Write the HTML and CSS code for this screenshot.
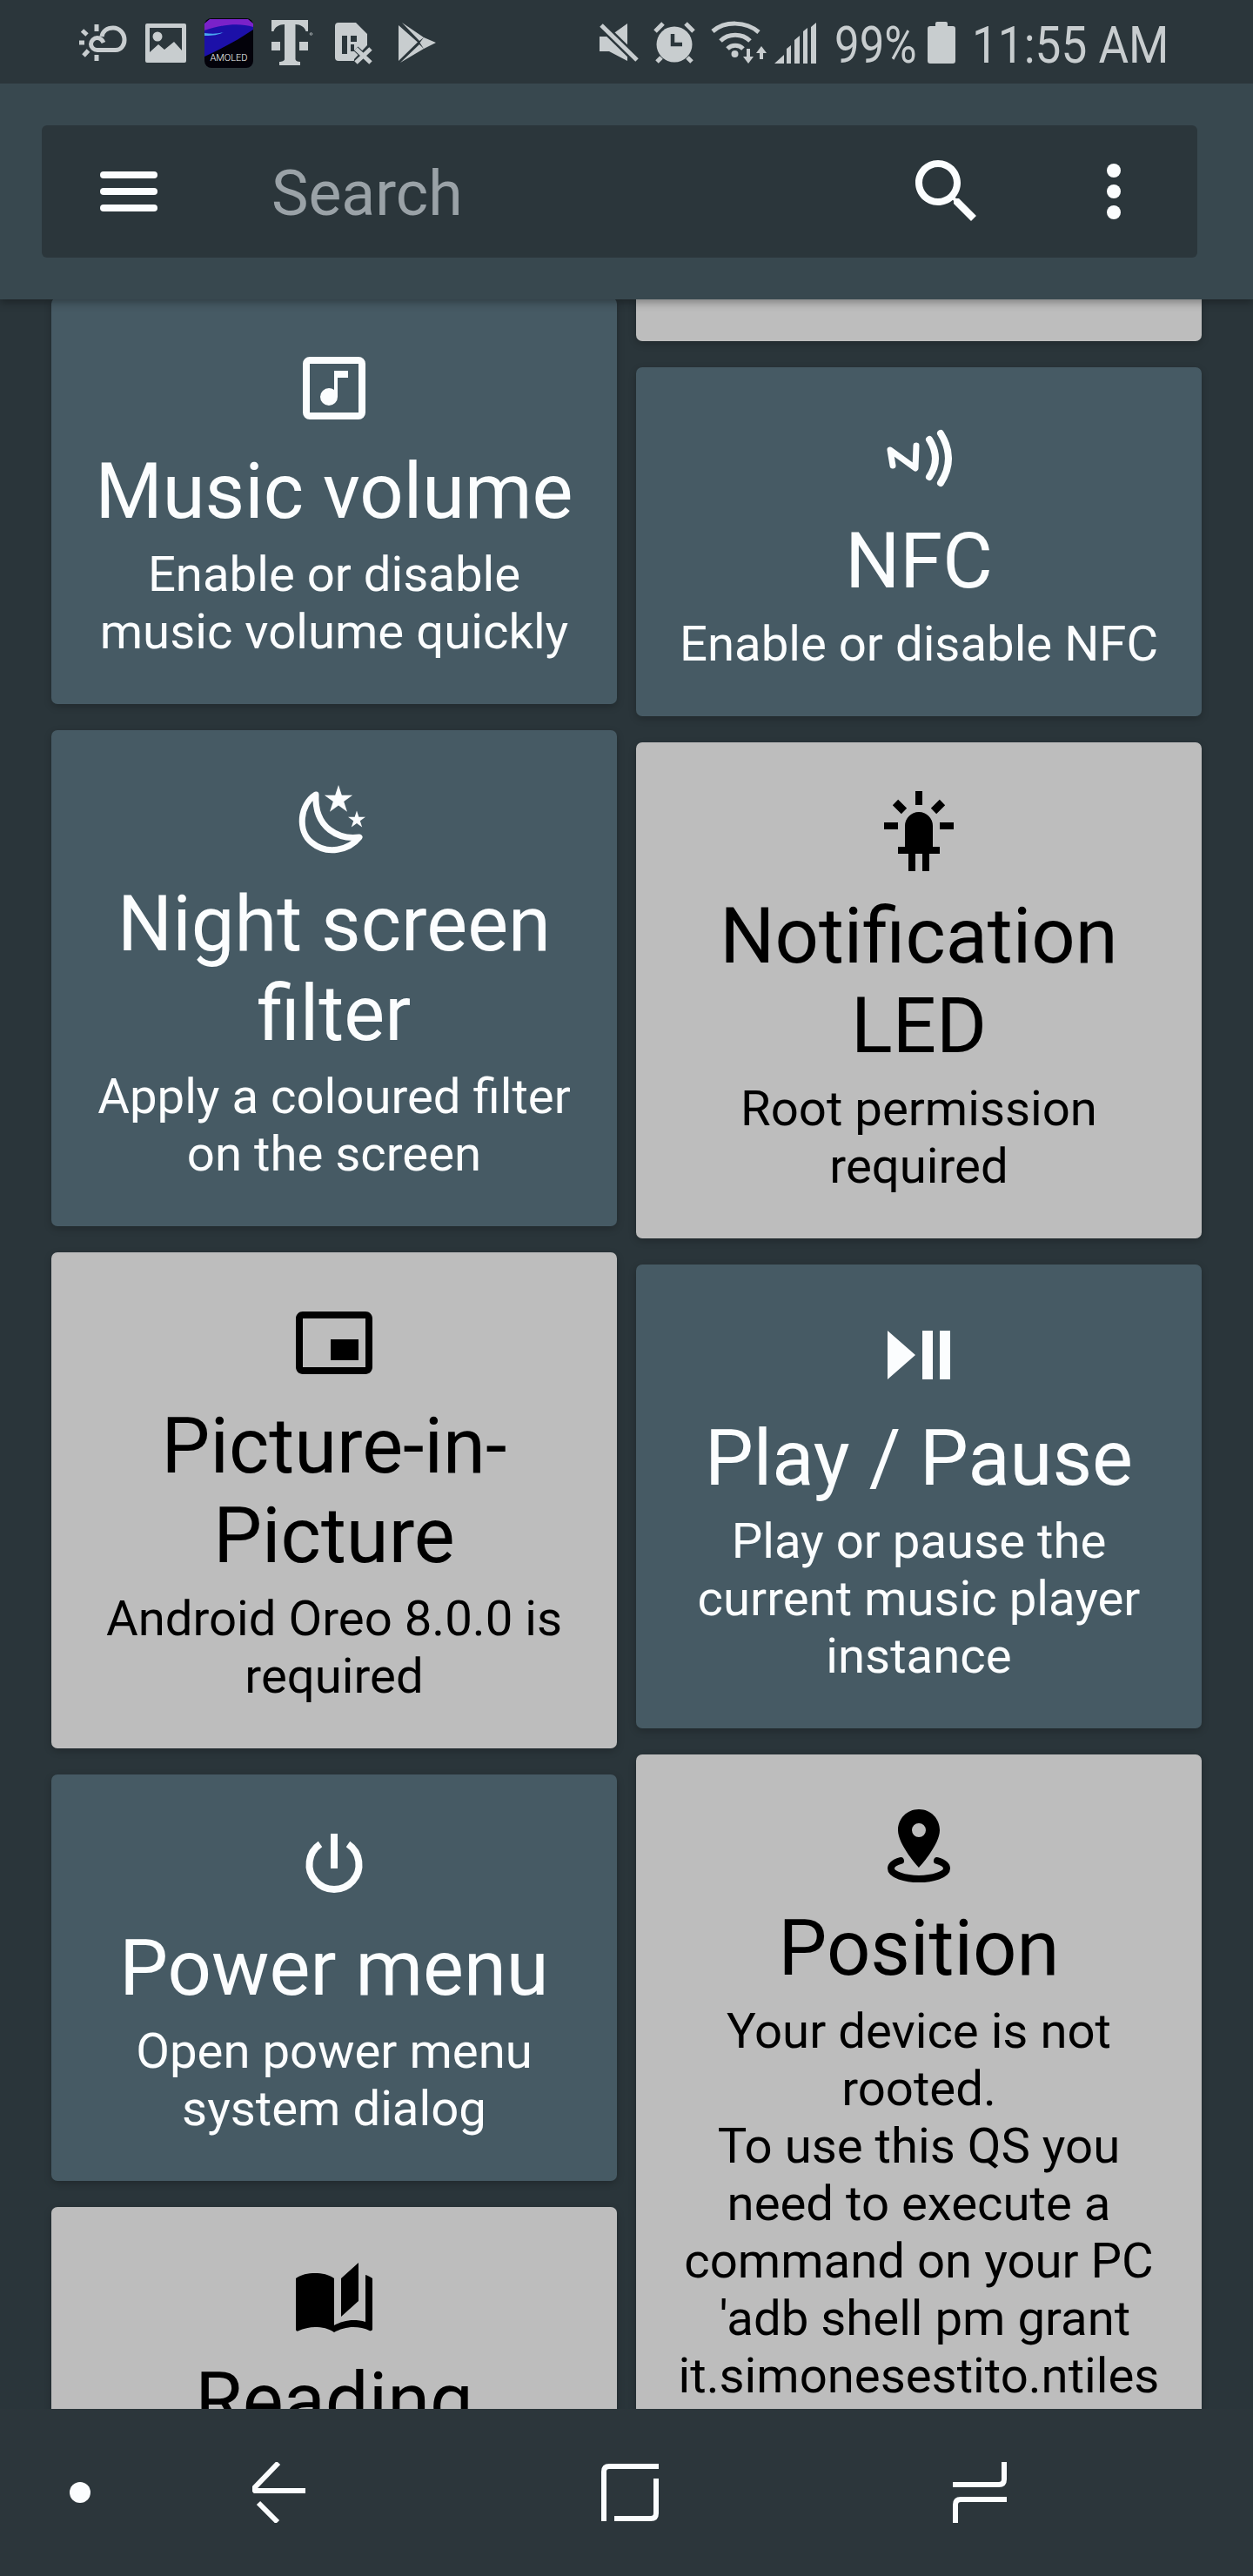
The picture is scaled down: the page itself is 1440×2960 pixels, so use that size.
FILE: index.html
```html
<!DOCTYPE html>
<html lang="en">
<head>
<meta charset="utf-8">
<title>Tiles</title>
<link rel="stylesheet" href="styles.css">
</head>
<body>
<div class="screen">
  <header class="top">
    <div class="status">
      <div class="status-left">
        <svg class="si" width="56" height="42" viewBox="0 0 56 42"><g fill="none" stroke="#c8cdcf" stroke-width="5"><path d="M29 21C27 17 25 15.500 21.700 15.500C18 15.500 14.500 19 14.500 22.700C14.500 26.500 18 29.500 21.700 29.500H43C49 29.500 53 24 53 18C53 10 47 4 40 4C33 4 28 8 27 14"/><path d="M1 21H7M21 0V8M21 35V42M4.500 7L10 12M6 36L11.500 30"/></g></svg>
        <svg class="si" width="47" height="45" viewBox="0 0 47 45"><path fill="#c8cdcf" fill-rule="evenodd" d="M2 0H45Q47 0 47 2V43Q47 45 45 45H2Q0 45 0 43V2Q0 0 2 0ZM5 5V33L15 24L22 30L33 21L42 31V5Z"/><circle cx="14" cy="15" r="5.500" fill="#c8cdcf"/></svg>
        <svg class="si" width="56" height="57" viewBox="0 0 56 57"><rect width="56" height="57" rx="8" fill="#03020a"/><path fill="#1c10a8" d="M0 14C20 4 40 5 56 7V13C40 24 20 35 0 44Z"/><path fill="#7a22c9" d="M6 1H50L56 6V10C40 5 20 7 0 14V6Z"/><path fill="#4aa8f0" d="M0 17C8 18 16 18 22 16C14 20 6 20 0 20Z"/><text x="28" y="49" class="amoled">AMOLED</text></svg>
        <svg class="si si-gap" width="43" height="52" viewBox="0 0 43 52"><path fill="#c8cdcf" d="M0 0H42V13H39.500C38.500 8 33 5 27.500 5V45C27.500 47 30 48 33 48V52H9V48C12 48 15 47 15 45V5C9 5 3.500 8 2.500 13H0Z"/><rect y="25" width="10" height="10" fill="#c8cdcf"/><rect x="32" y="25" width="10" height="10" fill="#c8cdcf"/><circle cx="45.500" cy="16" r="1.300" fill="none" stroke="#c8cdcf" stroke-width=".8"/></svg>
        <svg class="si si-gap" width="43" height="47" viewBox="0 0 43 47"><path fill="#c8cdcf" d="M4 0H24L37 13V26L22 42V44H4Q0 44 0 40V4Q0 0 4 0Z"/><path fill="#2b363b" d="M8 15H14V36H8ZM18 15H25V22H18ZM18 25H22V33H18Z"/><path fill="none" stroke="#2b363b" stroke-width="7" d="M24 30L41 46M41 30L24 46"/><path fill="none" stroke="#c8cdcf" stroke-width="5" d="M24 30L41 46M41 30L24 46"/></svg>
        <svg class="si" width="43" height="46" viewBox="0 0 43 46"><path fill="#c8cdcf" d="M0 3L22 22.500L0 44ZM4 0L29 17L24 21ZM29 17L43 23L29 30L24.500 23ZM2 46L29 30L24 25Z"/></svg>
      </div>
      <div class="status-right">
        <svg class="si" width="44" height="45" viewBox="0 0 44 45"><path fill="#c8cdcf" d="M0 15H11L32 0V43L11 32H0Z"/><path stroke="#2b363b" stroke-width="10" d="M2 2L44 43"/><path stroke="#c8cdcf" stroke-width="5" d="M2 2L43 42"/></svg>
        <svg class="si" width="46" height="48" viewBox="0 0 46 48"><circle cx="23" cy="26" r="20.500" fill="#c8cdcf"/><path fill="none" stroke="#2b363b" stroke-width="4.500" d="M21 14V26H32"/><path fill="none" stroke="#c8cdcf" stroke-width="5" d="M1 11L10 2M36 2L45 11M3 46L8 41M43 46L38 41"/></svg>
        <svg class="si si-tight" width="65" height="47" viewBox="0 0 65 47"><g fill="none" stroke="#c8cdcf" stroke-width="5"><path d="M2 10C16 -2 40 -2 55 11"/><path d="M11 21C20 12 36 12 45 21"/><path d="M19 30C24 25 32 25 37 30"/></g><circle cx="27.500" cy="36" r="4" fill="#c8cdcf"/><path fill="#c8cdcf" d="M41 30H45V39H49L43 47L37 39H41ZM56 35H60V42H56ZM58 27L64 35H52Z"/></svg>
        <svg class="si si-signal" width="48" height="47" viewBox="0 0 48 47"><path fill="#c8cdcf" d="M0 47L11 37V47ZM14 47V30L19 26V47ZM23 47V20L29 15V47ZM33 47V10L38 6V47ZM42 47V5L48 0V47Z"/></svg>
        <span class="stat-text stat-pct">99%</span>
        <svg class="si si-batt" width="32" height="48" viewBox="0 0 32 48"><path fill="#c8cdcf" d="M11 0H21Q23 0 23 2V5H29Q32 5 32 8V45Q32 48 29 48H3Q0 48 0 45V8Q0 5 3 5H9V2Q9 0 11 0Z"/></svg>
        <span class="stat-text stat-time">11:55 AM</span>
      </div>
    </div>
    <div class="appbar">
      <div class="searchbar">
        <svg class="menu" width="66" height="46" viewBox="0 0 66 46"><rect width="66" height="8" rx="4"/><rect y="19" width="66" height="8" rx="4"/><rect y="38" width="66" height="8" rx="4"/></svg>
        <span class="search-label">Search</span>
        <svg class="ico24" viewBox="0 0 24 24"><path d="M15.500 14h-.79l-.28-.27C15.410 12.590 16 11.110 16 9.500 16 5.910 13.090 3 9.500 3S3 5.910 3 9.500 5.910 16 9.500 16c1.610 0 3.090-.59 4.230-1.570l.27.28v.79l5 4.990L20.490 19l-4.990-5zm-6 0C7.010 14 5 11.990 5 9.500S7.010 5 9.500 5 14 7.010 14 9.500 11.990 14 9.500 14z"/></svg>
        <svg class="ico24 kebab" viewBox="0 0 24 24"><circle cx="12" cy="6" r="2"/><circle cx="12" cy="12" r="2"/><circle cx="12" cy="18" r="2"/></svg>
      </div>
    </div>
  </header>

  <main class="list">
    <div class="col col-left">
      <article class="card dark">
        <svg class="tile-icon" viewBox="0 0 24 24"><path d="M16 9H13V14.500A2.500 2.500 0 0 1 10.500 17A2.500 2.500 0 0 1 8 14.500A2.500 2.500 0 0 1 10.500 12C11.070 12 11.580 12.190 12 12.500V7H16V9M19 3A2 2 0 0 1 21 5V19A2 2 0 0 1 19 21H5A2 2 0 0 1 3 19V5A2 2 0 0 1 5 3H19M5 5V19H19V5H5Z"/></svg>
        <h2>Music volume</h2>
        <p>Enable or disable music volume quickly</p>
      </article>
      <article class="card dark">
        <svg class="tile-icon" viewBox="0 0 96 96"><path class="line" stroke-width="7" stroke-linejoin="round" d="M27 18C8 30 6 60 22 73C40 88 65 82 77 67C55 70 25 58 27 18Z"/><polygon transform="translate(53 24) scale(17)" points="0,-1 .2245,-.309 .951,-.309 .363,.118 .588,.809 0,.382 -.588,.809 -.363,.118 -.951,-.309 -.2245,-.309"/><polygon transform="translate(74 47) scale(10.500)" points="0,-1 .2245,-.309 .951,-.309 .363,.118 .588,.809 0,.382 -.588,.809 -.363,.118 -.951,-.309 -.2245,-.309"/></svg>
        <h2>Night screen filter</h2>
        <p>Apply a coloured filter on the screen</p>
      </article>
      <article class="card light">
        <svg class="tile-icon" viewBox="0 0 24 24"><path d="M19 11h-8v6h8v-6zm4 8V4.980C23 3.880 22.100 3 21 3H3c-1.100 0-2 .88-2 1.980V19c0 1.100.9 2 2 2h18c1.100 0 2-.9 2-2zm-2 .02H3V4.970h18v14.050z"/></svg>
        <h2>Picture-in-Picture</h2>
        <p>Android Oreo 8.0.0 is required</p>
      </article>
      <article class="card dark">
        <svg class="tile-icon" viewBox="0 0 96 96"><path class="line" stroke-width="8" d="M32 24A28.500 28.500 0 1 0 64 24"/><rect x="44" y="12" width="8" height="40"/></svg>
        <h2>Power menu</h2>
        <p>Open power menu system dialog</p>
      </article>
      <article class="card light">
        <svg class="tile-icon" viewBox="0 0 24 24"><path d="M19 2L14 6.500V17.500L19 13V2M6.500 5C4.550 5 2.450 5.400 1 6.500V21.160C1 21.410 1.250 21.660 1.500 21.660C1.600 21.660 1.650 21.590 1.750 21.590C3.100 20.940 5.050 20.500 6.500 20.500C8.450 20.500 10.550 20.900 12 22C13.350 21.150 15.800 20.500 17.500 20.500C19.150 20.500 20.850 20.810 22.250 21.560C22.350 21.610 22.400 21.590 22.500 21.590C22.750 21.590 23 21.340 23 21.090V6.500C22.400 6.050 21.750 5.750 21 5.500V19C19.900 18.650 18.700 18.500 17.500 18.500C15.800 18.500 13.350 19.150 12 20V6.500C10.550 5.400 8.450 5 6.500 5Z"/></svg>
        <h2>Reading mode</h2>
      </article>
    </div>
    <div class="col col-right">
      <div class="card light stub"></div>
      <article class="card dark">
        <svg class="tile-icon" viewBox="0 0 96 96"><path class="line" stroke-width="7" stroke-linecap="round" stroke-linejoin="round" d="M18 57L15 39L44 60L45 34"/><path class="line" stroke-width="8" stroke-linecap="round" d="M60 27Q74 49 60 70"/><path class="line" stroke-width="8" stroke-linecap="round" d="M73 20Q91 49 73 77"/></svg>
        <h2>NFC</h2>
        <p>Enable or disable NFC</p>
      </article>
      <article class="card light">
        <svg class="tile-icon" viewBox="0 0 96 96"><path d="M44 0H52V16H44ZM8 36H24V44H8ZM72 36H88V44H72ZM32 64V40A16 16 0 0 1 64 40V64ZM24 64H72V72H24ZM36 72H44V92H36ZM52 72H60V92H52Z"/><path class="line" stroke-width="9" d="M21 13L31 23M75 13L65 23"/></svg>
        <h2>Notification LED</h2>
        <p>Root permission required</p>
      </article>
      <article class="card dark">
        <svg class="tile-icon" viewBox="0 0 24 24"><path d="M3 5v14l8-7zm10 14h3V5h-3zm5-14v14h3V5z"/></svg>
        <h2>Play / Pause</h2>
        <p>Play or pause the current music player instance</p>
      </article>
      <article class="card light">
        <svg class="tile-icon" viewBox="0 0 96 96"><path fill-rule="evenodd" d="M48 7C34 7 24 18 24 31C24 48 48 74 48 74C48 74 72 48 72 31C72 18 62 7 48 7ZM48 23A8 8 0 1 1 48 39A8 8 0 1 1 48 23Z"/><path class="line" stroke-width="8" stroke-linecap="round" d="M27 66C20 68 16 71 16 75C16 82 32 87 48 87C64 87 80 82 80 75C80 71 76 68 69 66"/></svg>
        <h2>Position</h2>
        <p>Your device is not rooted.<br>To use this QS you need to execute a command on your PC<br>&nbsp;'adb shell pm grant it.simonesestito.ntiles</p>
      </article>
    </div>
  </main>

  <nav class="navbar">
    <svg class="nav-dot" width="24" height="24" viewBox="0 0 24 24"><circle cx="12" cy="12" r="12"/></svg>
    <svg class="nav-back" width="62" height="70" viewBox="0 0 62 70"><path d="M30 1L3 29Q1 31 3 33H61M7 47L29 69"/></svg>
    <svg class="nav-home" width="66" height="68" viewBox="0 0 66 68"><path d="M66 4H9Q3 4 3 10V67M63 18V58Q63 64 57 64H15"/></svg>
    <svg class="nav-recent" width="62" height="70" viewBox="0 0 62 70"><path d="M59 0V20Q59 26 53 26H0M62 43H9Q3 43 3 49V70"/></svg>
  </nav>
</div>
</body>
</html>
```

FILE: styles.css
```css
* { box-sizing: border-box; }
html, body { margin: 0; padding: 0; }
body { background: #2b363b; font-family: Roboto, "Liberation Sans", sans-serif; }

.screen { width: 1440px; height: 2960px; display: flex; flex-direction: column; overflow: hidden; background: #2b363b; }

.top { position: relative; z-index: 2; flex: none; box-shadow: 0 3px 10px rgba(0, 0, 0, .35); }

.status { height: 96px; background: #2b363b; display: flex; justify-content: space-between; align-items: center; padding: 2px 100px 0 90px; }
.status-left, .status-right { display: flex; align-items: center; }
.status-left { gap: 21px; }
.si { display: block; flex: none; overflow: visible; }
.si-gap { margin-right: 9px; }
.status-right .si { margin-right: 19px; }
.status-right .si-tight { margin-right: 8px; }
.status-right .si-signal { margin-right: 21px; }
.status-right .si-batt { margin-right: 19px; }
.amoled { font-family: Roboto, sans-serif; font-weight: 300; font-size: 11px; fill: #fff; text-anchor: middle; }
.stat-text { display: block; margin-top: 5px; color: #c8cdcf; font-size: 60px; line-height: 60px; white-space: nowrap; transform-origin: left center; }
.stat-pct { width: 107px; transform: scaleX(.85); }
.stat-time { width: 223px; transform: scaleX(.885); }

.appbar { height: 248px; background: #38484f; padding: 48px 64px 48px 48px; }
.searchbar { height: 152px; background: #2b363b; border-radius: 6px; display: flex; align-items: center; padding-left: 67px; padding-right: 48px; color: #fff; }
.menu { flex: none; fill: #fbfdfe; }
.search-label { flex: 1; margin: 4px 0 0 131px; font-size: 71.5px; color: #9aa2a7; }
.ico24 { width: 96px; height: 96px; flex: none; fill: #fbfdfe; }
.kebab { margin-left: 96px; }

.list { flex: 1; min-height: 0; overflow: hidden; display: flex; gap: 22px; padding: 0 59px; background: #2a353a; }
.col { width: 650px; flex: none; display: flex; flex-direction: column; gap: 30px; }
.col-left { margin-top: -2px; }

.card { flex: none; border-radius: 7px; padding: 56px 48px 50.5px; text-align: center; box-shadow: 0 3px 8px rgba(0, 0, 0, .22); }
.dark { background: #465a64; color: #fbfdfe; fill: #fbfdfe; }
.light { background: #bdbdbd; color: #000; fill: #000; }
.card .line { fill: none; }
.dark .line { stroke: #fbfdfe; }
.light .line { stroke: #000; }
.stub { height: 48px; padding: 0; border-radius: 0 0 7px 7px; }

.tile-icon { display: block; width: 96px; height: 96px; margin: 0 auto; }
.card h2 { margin: 20px 0 0; font-weight: 400; font-size: 88.5px; line-height: 103px; }
.card p { margin: 9.5px 0 0; font-size: 56.3px; line-height: 66px; }

.navbar { flex: none; height: 192px; background: #2c363b; display: flex; align-items: center; padding-left: 80px; }
.navbar svg { flex: none; display: block; fill: none; stroke: #fbfdfe; stroke-width: 6; }
.navbar .nav-dot { fill: #fbfdfe; stroke: none; }
.nav-back { margin-left: 186px; }
.nav-home { margin-left: 339px; }
.nav-recent { margin-left: 338px; }
```
